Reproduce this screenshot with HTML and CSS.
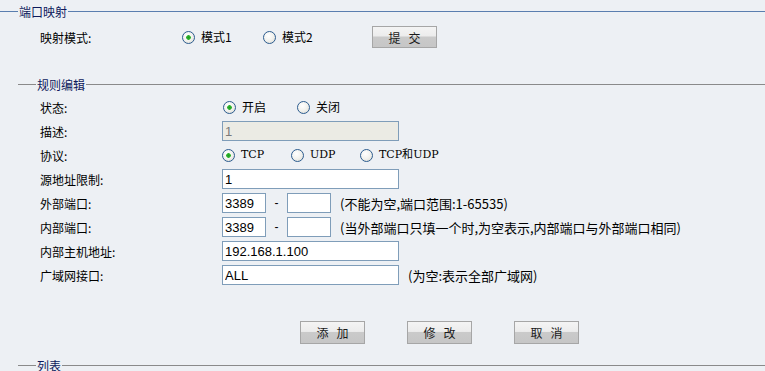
FILE: index.html
```html
<!DOCTYPE html>
<html lang="zh-CN">
<head>
<meta charset="utf-8">
<title>端口映射</title>
<link rel="stylesheet" href="styles.css">
</head>
<body>
<div class="legend legend-blue"><span class="seg seg-first"></span><span class="legend-text">端口映射</span><span class="seg seg-fill"></span></div>
<div class="row row-mode">
  <span class="label label-mode">映射模式:</span>
  <label class="opt opt-mode"><input class="radio" type="radio" name="mode" checked><span>模式1</span></label>
  <label class="opt opt-mode2"><input class="radio" type="radio" name="mode"><span>模式2</span></label>
  <button class="btn btn-submit" type="button">提交</button>
</div>

<div class="legend legend-gray"><span class="seg seg-short"></span><span class="legend-text">规则编辑</span><span class="seg seg-fill"></span></div>
<div class="rows">
  <div class="row">
    <span class="label">状态:</span>
    <label class="opt opt-state"><input class="radio" type="radio" name="st" checked><span>开启</span></label>
    <label class="opt opt-auto"><input class="radio" type="radio" name="st"><span>关闭</span></label>
  </div>
  <div class="row">
    <span class="label">描述:</span>
    <input class="text wide" type="text" value="1" disabled>
  </div>
  <div class="row">
    <span class="label">协议:</span>
    <label class="opt opt-proto"><input class="radio" type="radio" name="pr" checked><span class="mono">TCP</span></label>
    <label class="opt opt-proto"><input class="radio" type="radio" name="pr"><span class="mono">UDP</span></label>
    <label class="opt opt-auto"><input class="radio" type="radio" name="pr"><span class="mono">TCP和UDP</span></label>
  </div>
  <div class="row">
    <span class="label">源地址限制:</span>
    <input class="text wide" type="text" value="1">
  </div>
  <div class="row">
    <span class="label">外部端口:</span>
    <input class="text port" type="text" value="3389">
    <span class="dash">-</span>
    <input class="text port" type="text" value="">
    <span class="hint">(不能为空,端口范围:1-65535)</span>
  </div>
  <div class="row">
    <span class="label">内部端口:</span>
    <input class="text port" type="text" value="3389">
    <span class="dash">-</span>
    <input class="text port" type="text" value="">
    <span class="hint">(当外部端口只填一个时,为空表示,内部端口与外部端口相同)</span>
  </div>
  <div class="row">
    <span class="label">内部主机地址:</span>
    <input class="text wide" type="text" value="192.168.1.100">
  </div>
  <div class="row">
    <span class="label">广域网接口:</span>
    <input class="text wide" type="text" value="ALL">
    <span class="hint hint-wan">(为空:表示全部广域网)</span>
  </div>
</div>
<div class="actions">
  <button class="btn" type="button">添加</button>
  <button class="btn" type="button">修改</button>
  <button class="btn" type="button">取消</button>
</div>
<div class="legend legend-gray legend-list"><span class="seg seg-short"></span><span class="legend-text">列表</span><span class="seg seg-fill"></span></div>
</body>
</html>
```

FILE: styles.css
```css
html, body {
  margin: 0;
  padding: 0;
  background: #edf0f4;
}
body {
  font-family: "Noto Sans CJK SC", "Liberation Sans", sans-serif;
  font-size: 12px;
  color: #000;
  width: 765px;
  height: 371px;
  overflow: hidden;
}
.legend {
  display: flex;
  align-items: center;
  height: 22px;
}
.legend-text {
  color: #0d1a5c;
  font-size: 12px;
  line-height: 22px;
  padding: 1px 1px 0;
}
.seg {
  height: 1px;
  display: block;
}
.legend-blue .seg { background: #5a7eaf; }
.legend-gray .seg { background: #8a8a8a; }
.seg-first { width: 18px; }
.seg-short { width: 18px; margin-left: 18px; }
.seg-fill { flex: 1; }
.legend-gray { margin-top: 24px; }
.legend-list { margin-top: 10px; }

.row {
  display: flex;
  align-items: center;
  height: 24px;
  padding-left: 40px;
}
.row-mode { margin-top: 3px; }
.label {
  width: 182px;
  flex: none;
}
.label-mode { width: 142px; }
.opt {
  display: inline-flex;
  align-items: center;
  gap: 6px;
  width: 74px;
  flex: none;
  white-space: nowrap;
}
.opt-auto { width: auto; }
.opt-mode { width: 81px; }
.opt-mode2 { width: 89px; }
.opt-state { width: 74px; margin-left: 1px; }
.opt-proto { width: 69px; }
.opt span { line-height: 14px; }
.mono {
  font-family: "DejaVu Serif", "Liberation Serif", serif;
  font-size: 11px;
}
.radio {
  appearance: none;
  -webkit-appearance: none;
  margin: 0;
  width: 13px;
  height: 13px;
  border-radius: 50%;
  border: 1px solid #2c5c8f;
  background: radial-gradient(circle at 40% 35%, #ffffff 0, #f2f2ee 50%, #d8d8d0 100%);
  box-sizing: border-box;
  flex: none;
}
.radio:checked {
  background:
    radial-gradient(circle at 50% 50%, #1f9a1f 0, #2fb52f 2px, rgba(0,0,0,0) 2.6px),
    radial-gradient(circle at 40% 35%, #ffffff 0, #f2f2ee 50%, #d8d8d0 100%);
}
.text {
  box-sizing: border-box;
  height: 20px;
  border: 1px solid #7f9db9;
  background: #fff;
  margin: 0;
  padding: 0 2px;
  font-family: "Liberation Sans", Arial, sans-serif;
  font-size: 13px;
  color: #000;
  outline: none;
}
.text:disabled {
  background: #ebebe4;
  color: #7a7a7a;
}
.wide { width: 177px; }
.port { width: 44px; }
.dash {
  width: 21px;
  text-align: center;
  font-family: "Liberation Sans", Arial, sans-serif;
}
.hint {
  margin-left: 9px;
  white-space: nowrap;
  font-size: 13px;
}

.btn {
  box-sizing: border-box;
  width: 65px;
  height: 23px;
  border: 1px solid #a6a6a6;
  background: linear-gradient(#f4f4f4 0, #ececec 45%, #cacaca 50%, #c6c6c6 100%);
  font-family: "Noto Sans CJK SC", sans-serif;
  font-size: 12px;
  color: #1a1a1a;
  padding: 0 0 0 8px;
  margin: 0;
  letter-spacing: 8px;
  text-align: center;
}
.btn-submit { margin-left: 20px; height: 22px; }
.actions {
  display: flex;
  gap: 42px;
  padding-left: 300px;
  margin-top: 34px;
}
```
